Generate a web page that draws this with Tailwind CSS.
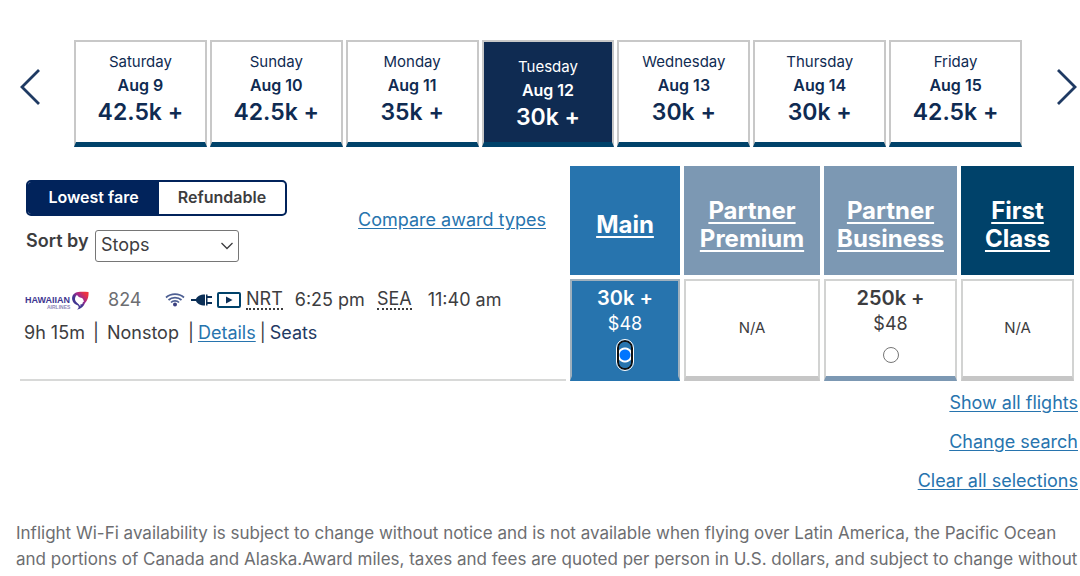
<!DOCTYPE html>
<html lang="en">
<head>
    <meta charset="UTF-8">
    <meta name="viewport" content="width=device-width, initial-scale=1.0">
    <title>Choose Flights</title>
    <script src="https://cdn.jsdelivr.net/npm/@tailwindcss/browser@4"></script>
</head>
<body class="bg-white font-['Inter',sans-serif] text-[#3d3d3f] overflow-x-hidden">

    <!-- Date carousel -->
    <nav aria-label="Travel dates" class="flex items-center pt-10 pl-5 pr-[3px]">
        <button type="button" aria-label="Previous dates" class="w-[54px] pb-[14px]">
            <svg class="w-5 h-9" viewBox="0 0 20 36" fill="none" stroke="#1f3a63" stroke-width="2.8"><path d="M19 1L2 18l17 17"/></svg>
        </button>
        <div class="flex-1 grid grid-cols-7 gap-[3px] text-center text-[#0f2b52]">
            <button type="button" class="flex flex-col items-center h-[107px] pt-2 border-2 border-b-[5px] border-[#c8c8c8] border-b-[#00426a]">
                <span class="text-[15px] leading-6">Saturday</span>
                <span class="text-base leading-[22px] font-semibold">Aug 9</span>
                <span class="text-[23px] leading-8 font-semibold">42.5k +</span>
            </button>
            <button type="button" class="flex flex-col items-center h-[107px] pt-2 border-2 border-b-[5px] border-[#c8c8c8] border-b-[#00426a]">
                <span class="text-[15px] leading-6">Sunday</span>
                <span class="text-base leading-[22px] font-semibold">Aug 10</span>
                <span class="text-[23px] leading-8 font-semibold">42.5k +</span>
            </button>
            <button type="button" class="flex flex-col items-center h-[107px] pt-2 border-2 border-b-[5px] border-[#c8c8c8] border-b-[#00426a]">
                <span class="text-[15px] leading-6">Monday</span>
                <span class="text-base leading-[22px] font-semibold">Aug 11</span>
                <span class="text-[23px] leading-8 font-semibold">35k +</span>
            </button>
            <button type="button" aria-current="date" class="flex flex-col items-center h-[107px] pt-[13px] border-2 border-b-[5px] border-[#c8c8c8] border-b-[#00426a] bg-[#0f2b52] bg-clip-padding text-white">
                <span class="text-[15px] leading-6">Tuesday</span>
                <span class="text-base leading-[22px] font-semibold">Aug 12</span>
                <span class="text-[23px] leading-8 font-semibold">30k +</span>
            </button>
            <button type="button" class="flex flex-col items-center h-[107px] pt-2 border-2 border-b-[5px] border-[#c8c8c8] border-b-[#00426a]">
                <span class="text-[15px] leading-6">Wednesday</span>
                <span class="text-base leading-[22px] font-semibold">Aug 13</span>
                <span class="text-[23px] leading-8 font-semibold">30k +</span>
            </button>
            <button type="button" class="flex flex-col items-center h-[107px] pt-2 border-2 border-b-[5px] border-[#c8c8c8] border-b-[#00426a]">
                <span class="text-[15px] leading-6">Thursday</span>
                <span class="text-base leading-[22px] font-semibold">Aug 14</span>
                <span class="text-[23px] leading-8 font-semibold">30k +</span>
            </button>
            <button type="button" class="flex flex-col items-center h-[107px] pt-2 border-2 border-b-[5px] border-[#c8c8c8] border-b-[#00426a]">
                <span class="text-[15px] leading-6">Friday</span>
                <span class="text-base leading-[22px] font-semibold">Aug 15</span>
                <span class="text-[23px] leading-8 font-semibold">42.5k +</span>
            </button>
        </div>
        <button type="button" aria-label="Next dates" class="flex justify-end w-[55px] pb-[14px]">
            <svg class="w-5 h-9" viewBox="0 0 20 36" fill="none" stroke="#1f3a63" stroke-width="2.8"><path d="M1 1l17 17L1 35"/></svg>
        </button>
    </nav>

    <!-- Flight matrix -->
    <div class="mt-[15px] pl-4 pr-[2px]">
        <table class="w-full table-fixed border-separate border-spacing-1">
            <colgroup>
                <col>
                <col class="w-[110px]">
                <col class="w-[136px]">
                <col class="w-[133px]">
                <col class="w-[113px]">
            </colgroup>
            <thead>
                <tr class="h-[109px]">
                    <td class="p-0 align-top">
                        <div class="flex justify-between pl-[6px] pr-5 pt-[14px]">
                            <div>
                                <div class="flex w-[261px] h-9 border-2 border-[#01235b] rounded-[5px] overflow-hidden text-base font-semibold">
                                    <button type="button" aria-pressed="true" class="w-[131px] pb-[2px] bg-[#01235b] text-white">Lowest fare</button>
                                    <button type="button" aria-pressed="false" class="flex-1 pb-[2px]">Refundable</button>
                                </div>
                                <div class="flex mt-[14px]">
                                    <label for="sort" class="w-[69px] text-lg leading-[22px] font-semibold whitespace-nowrap">Sort by</label>
                                    <div class="relative">
                                        <select id="sort" class="appearance-none w-[144px] h-8 pl-[5px] pb-[2px] border border-[#767676] rounded-[3px] bg-white text-lg">
                                            <option>Stops</option>
                                            <option>Price</option>
                                        </select>
                                        <svg class="absolute right-[6px] top-3 w-3 h-2 pointer-events-none" viewBox="0 0 12 8" fill="none" stroke="#3d3d3f" stroke-width="1.3"><path d="M0.5 1L6 6.500L11.500 1"/></svg>
                                    </div>
                                </div>
                            </div>
                            <a href="#" class="mt-7 text-lg leading-6 text-[#2774ae] underline underline-offset-2 whitespace-nowrap">Compare award types</a>
                        </div>
                    </td>
                    <th scope="col" class="p-0 bg-[#2774ae] text-white"><a href="#" class="block pt-2 text-2xl leading-7 font-bold underline underline-offset-3 decoration-2">Main</a></th>
                    <th scope="col" class="p-0 bg-[#7c98b3] text-white"><a href="#" class="block pt-2 text-2xl leading-7 font-bold underline underline-offset-3 decoration-2">Partner<br>Premium</a></th>
                    <th scope="col" class="p-0 bg-[#7c98b3] text-white"><a href="#" class="block pt-2 text-2xl leading-7 font-bold underline underline-offset-3 decoration-2">Partner<br>Business</a></th>
                    <th scope="col" class="p-0 bg-[#00426a] text-white"><a href="#" class="block pt-2 text-2xl leading-7 font-bold underline underline-offset-3 decoration-2">First<br>Class</a></th>
                </tr>
            </thead>
            <tbody>
                <tr class="h-[102px]">
                    <td class="p-0 align-top border-b-2 border-[#d8d9d8]">
                        <div class="flex items-center h-[34px] mt-1 pl-[5px] text-lg whitespace-nowrap">
                            <!-- Hawaiian Airlines logo -->
                            <svg role="img" aria-label="Hawaiian Airlines" class="w-16 h-5 mr-[19px]" viewBox="0 0 64 20">
                                <defs>
                                    <linearGradient id="tail" x1="1" y1="0" x2="0" y2="1">
                                        <stop offset="0.150" stop-color="#ee3340"/>
                                        <stop offset="0.400" stop-color="#a32a8c"/>
                                        <stop offset="0.600" stop-color="#413691"/>
                                    </linearGradient>
                                </defs>
                                <text x="0" y="13" font-family="Liberation Sans" font-size="9" font-weight="700" fill="#413691">HAWAIIAN</text>
                                <text x="22" y="18.500" font-family="Liberation Sans" font-size="5" font-weight="700" fill="#8e88b8">AIRLINES</text>
                                <path fill="url(#tail)" d="M47.500 6C49 2 53 1 63.500 2C64 7 62 11 60 13C59 16 56 19 52 19.500C54 18 54 17 53 15.500C48.500 14 46 10 47.500 6Z"/>
                                <path fill="#fff" d="M52 5C53 6 53.500 7 55 7.500C56.500 8 57.500 8 58 9L59 11.500L57.800 12.200C57.800 13.800 57 14.500 55.500 14.300L55.300 16.500C54 13.500 50.500 12.500 50 9.500C50 7.500 50.500 6 52 5Z"/>
                            </svg>
                            <span class="w-[57px] text-[#6d6e71]">824</span>
                            <span class="flex items-center gap-[5px] w-20">
                                <svg role="img" aria-label="Wi-Fi" class="w-5 h-4" viewBox="0 0 20 16" fill="none" stroke="#4d5f93" stroke-width="1.700">
                                    <path d="M1 5.500C6 1 14 1 19 5.500M3.500 8C7 4.800 13 4.800 16.500 8M6 10.500C8 8.200 12 8.200 14 10.500"/>
                                    <circle cx="10" cy="12.500" r="2" fill="#3a3f80" stroke="none"/>
                                </svg>
                                <svg role="img" aria-label="Power outlet" class="w-[22px] h-4" viewBox="0 0 22 16" fill="#0b2f57">
                                    <path d="M1 7h5c1-2.500 4-4.500 9-4.500v11c-5 0-8-2-9-4.500H1zM16 2.500h1.500v1.500h4.500v2h-4.500v4h4.500v2h-4.500v1.500h-1.500z"/>
                                </svg>
                                <svg role="img" aria-label="Entertainment" class="w-6 h-4" viewBox="0 0 24 16">
                                    <rect x="1" y="1" width="22" height="14" rx="1" fill="none" stroke="#00426a" stroke-width="2"/>
                                    <path d="M9 4.500L15.500 8L9 11.500z" fill="#0b2f57"/>
                                </svg>
                            </span>
                            <abbr title="Tokyo Narita" class="ml-px mr-3 leading-[18px] no-underline border-b-2 border-dotted border-[#3d3d3f]">NRT</abbr>
                            <span class="mr-3">6:25 pm</span>
                            <abbr title="Seattle" class="mr-4 leading-[18px] no-underline border-b-2 border-dotted border-[#3d3d3f]">SEA</abbr>
                            <span>11:40 am</span>
                        </div>
                        <div class="flex pl-1 text-lg leading-8 whitespace-nowrap">
                            <span>9h 15m</span>
                            <span class="ml-2">|</span>
                            <span class="mx-2">Nonstop</span>
                            <span class="ml-px">|</span>
                            <a href="#" class="mx-1 text-[#2774ae] underline underline-offset-2">Details</a>
                            <span>|</span>
                            <a href="#" class="ml-1 text-[#1f3a63]">Seats</a>
                        </div>
                    </td>
                    <td class="p-0 align-top text-center bg-[#2774ae] bg-clip-padding text-white border-2 border-b-[5px] border-[#9fb0bd] border-b-[#2774ae]">
                        <label for="fare-main" class="block pt-[3px]">
                            <span class="block text-xl leading-7 font-semibold">30k +</span>
                            <span class="block text-lg leading-6">$48</span>
                        </label>
                        <input id="fare-main" type="radio" name="fare" checked class="appearance-none block mx-auto mt-[6px] w-3 h-[26px] rounded-full bg-[radial-gradient(circle_at_center,#0075ff_5px,#fff_6px,#fff_7px,#2774ae_8px)] ring-2 ring-[#101010] outline-1 outline-offset-2 outline-white">
                    </td>
                    <td class="p-0 text-center text-[15px] border-2 border-b-[5px] border-[#d2d3d2] border-b-[#c6c6c6]">N/A</td>
                    <td class="p-0 align-top text-center border-2 border-b-[5px] border-[#d2d3d2] border-b-[#7c98b3]">
                        <label for="fare-business" class="block pt-[3px]">
                            <span class="block text-xl leading-7 font-semibold">250k +</span>
                            <span class="block text-lg leading-6">$48</span>
                        </label>
                        <input id="fare-business" type="radio" name="fare" class="appearance-none block mx-auto mt-[11px] size-4 rounded-full border border-[#767676] bg-white">
                    </td>
                    <td class="p-0 text-center text-[15px] border-2 border-b-[5px] border-[#d2d3d2] border-b-[#c6c6c6]">N/A</td>
                </tr>
            </tbody>
        </table>
    </div>

    <div class="flex flex-col items-end gap-[15px] mt-[6px] pr-[2px] text-lg leading-6 text-[#2774ae]">
        <a href="#" class="underline underline-offset-2">Show all flights</a>
        <a href="#" class="underline underline-offset-2">Change search</a>
        <a href="#" class="underline underline-offset-2">Clear all selections</a>
    </div>

    <p class="h-[55px] overflow-hidden mt-[27px] pl-4 text-[17px] leading-[26px] text-[#6d6e71]">Inflight Wi-Fi availability is subject to change without notice and is not available when flying over Latin America, the Pacific Ocean and portions of Canada and Alaska.Award miles, taxes and fees are quoted per person in U.S. dollars, and subject to change without</p>

</body>
</html>
